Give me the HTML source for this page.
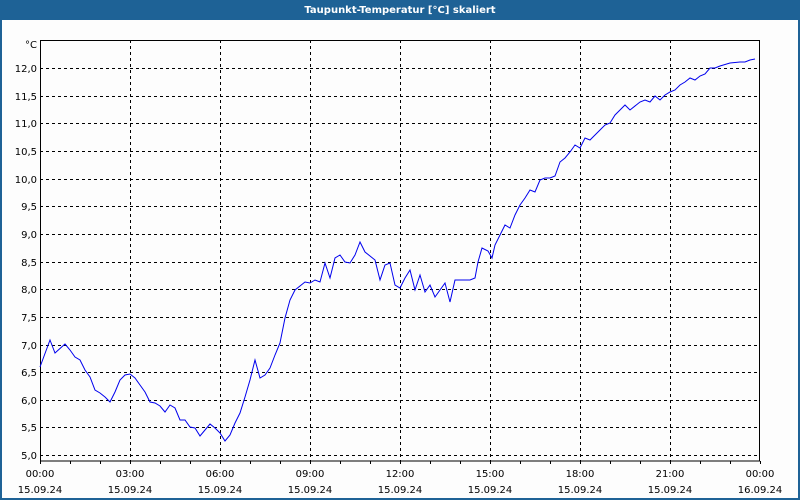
<!DOCTYPE html>
<html><head><meta charset="utf-8"><style>
html,body{margin:0;padding:0;width:800px;height:500px;overflow:hidden;background:#1e6296;}
svg{display:block;font-family:"DejaVu Sans","Liberation Sans",sans-serif;}
</style></head><body>
<svg width="800" height="500" viewBox="0 0 800 500">
<rect x="0" y="0" width="800" height="500" fill="#1e6296"/>
<rect x="2" y="20" width="796" height="478" fill="#fdfdfd"/>
<text x="400" y="13" fill="#fff" font-size="10" font-weight="bold" text-anchor="middle">Taupunkt-Temperatur [°C] skaliert</text>
<g stroke="#000" stroke-width="1" stroke-dasharray="3,3" shape-rendering="crispEdges">
<line x1="40" x2="760" y1="68.5" y2="68.5"/><line x1="40" x2="760" y1="96.5" y2="96.5"/><line x1="40" x2="760" y1="123.5" y2="123.5"/><line x1="40" x2="760" y1="151.5" y2="151.5"/><line x1="40" x2="760" y1="179.5" y2="179.5"/><line x1="40" x2="760" y1="206.5" y2="206.5"/><line x1="40" x2="760" y1="234.5" y2="234.5"/><line x1="40" x2="760" y1="262.5" y2="262.5"/><line x1="40" x2="760" y1="289.5" y2="289.5"/><line x1="40" x2="760" y1="317.5" y2="317.5"/><line x1="40" x2="760" y1="345.5" y2="345.5"/><line x1="40" x2="760" y1="372.5" y2="372.5"/><line x1="40" x2="760" y1="400.5" y2="400.5"/><line x1="40" x2="760" y1="427.5" y2="427.5"/><line x1="40" x2="760" y1="455.5" y2="455.5"/>
<line x1="130.5" x2="130.5" y1="40" y2="461"/><line x1="220.5" x2="220.5" y1="40" y2="461"/><line x1="310.5" x2="310.5" y1="40" y2="461"/><line x1="400.5" x2="400.5" y1="40" y2="461"/><line x1="490.5" x2="490.5" y1="40" y2="461"/><line x1="580.5" x2="580.5" y1="40" y2="461"/><line x1="670.5" x2="670.5" y1="40" y2="461"/>
</g>
<g stroke="#000" stroke-width="1" fill="none" shape-rendering="crispEdges">
<rect x="40.5" y="40.5" width="719" height="420.5"/>
<path d="M70.5 461v3M100.5 461v3M130.5 461v3M160.5 461v3M190.5 461v3M220.5 461v3M250.5 461v3M280.5 461v3M310.5 461v3M340.5 461v3M370.5 461v3M400.5 461v3M430.5 461v3M460.5 461v3M490.5 461v3M520.5 461v3M550.5 461v3M580.5 461v3M610.5 461v3M640.5 461v3M670.5 461v3M700.5 461v3M730.5 461v3M760.5 461v3M40.5 461v3"/>
</g>
<polyline fill="none" stroke="#0000ee" stroke-width="1" points="40,367 50,340 55,353 65,344 70,350 75,357 80,360 85,370 90,377 95,390 100,393 105,397 110,402 115,392 120,380 125,375 130,374 135,378 140,385 145,392 150,402 155,403 160,406 165,412 170,405 175,408 180,420 185,420 190,427 195,428 200,436 205,430 210,424 215,428 220,433 225,441 230,435 235,423 240,413 245,397 250,380 255,360 260,378 265,375 270,368 275,355 280,343 285,318 290,300 295,290 305,282 310,283 315,280 320,282 325,263 330,278 335,258 340,255 345,262 350,263 355,255 360,242 365,252 375,260 380,280 385,265 390,263 395,285 400,288 405,278 410,270 415,290 420,275 425,292 430,285 435,297 440,290 445,283 450,302 455,280 470,280 475,278 478,262 482,248 488,251 492,258 495,245 500,235 505,225 510,228 515,215 520,205 525,198 530,190 535,192 540,180 545,178 550,178 555,176 560,162 565,158 570,152 575,145 580,148 585,138 590,140 595,135 600,130 605,125 610,123 615,115 620,110 625,105 630,110 640,102 645,100 650,102 655,96 660,100 665,95 670,92 675,90 680,85 685,82 690,78 695,80 700,76 705,74 710,68 715,68 720,66 730,63 740,62 745,62 750,60 755,59"/>
<g font-size="10" fill="#000" text-anchor="end">
<text x="37" y="48">°C</text>
<text x="37" y="72">12,0</text><text x="37" y="100">11,5</text><text x="37" y="127">11,0</text><text x="37" y="155">10,5</text><text x="37" y="183">10,0</text><text x="37" y="210">9,5</text><text x="37" y="238">9,0</text><text x="37" y="266">8,5</text><text x="37" y="293">8,0</text><text x="37" y="321">7,5</text><text x="37" y="349">7,0</text><text x="37" y="376">6,5</text><text x="37" y="404">6,0</text><text x="37" y="431">5,5</text><text x="37" y="459">5,0</text>
</g>
<g font-size="10" fill="#000" text-anchor="middle">
<text x="40" y="477">00:00</text><text x="40" y="493">15.09.24</text>
<text x="130" y="477">03:00</text><text x="130" y="493">15.09.24</text>
<text x="220" y="477">06:00</text><text x="220" y="493">15.09.24</text>
<text x="310" y="477">09:00</text><text x="310" y="493">15.09.24</text>
<text x="400" y="477">12:00</text><text x="400" y="493">15.09.24</text>
<text x="490" y="477">15:00</text><text x="490" y="493">15.09.24</text>
<text x="580" y="477">18:00</text><text x="580" y="493">15.09.24</text>
<text x="670" y="477">21:00</text><text x="670" y="493">15.09.24</text>
<text x="760" y="477">00:00</text><text x="760" y="493">16.09.24</text>
</g>
</svg>
</body></html>
